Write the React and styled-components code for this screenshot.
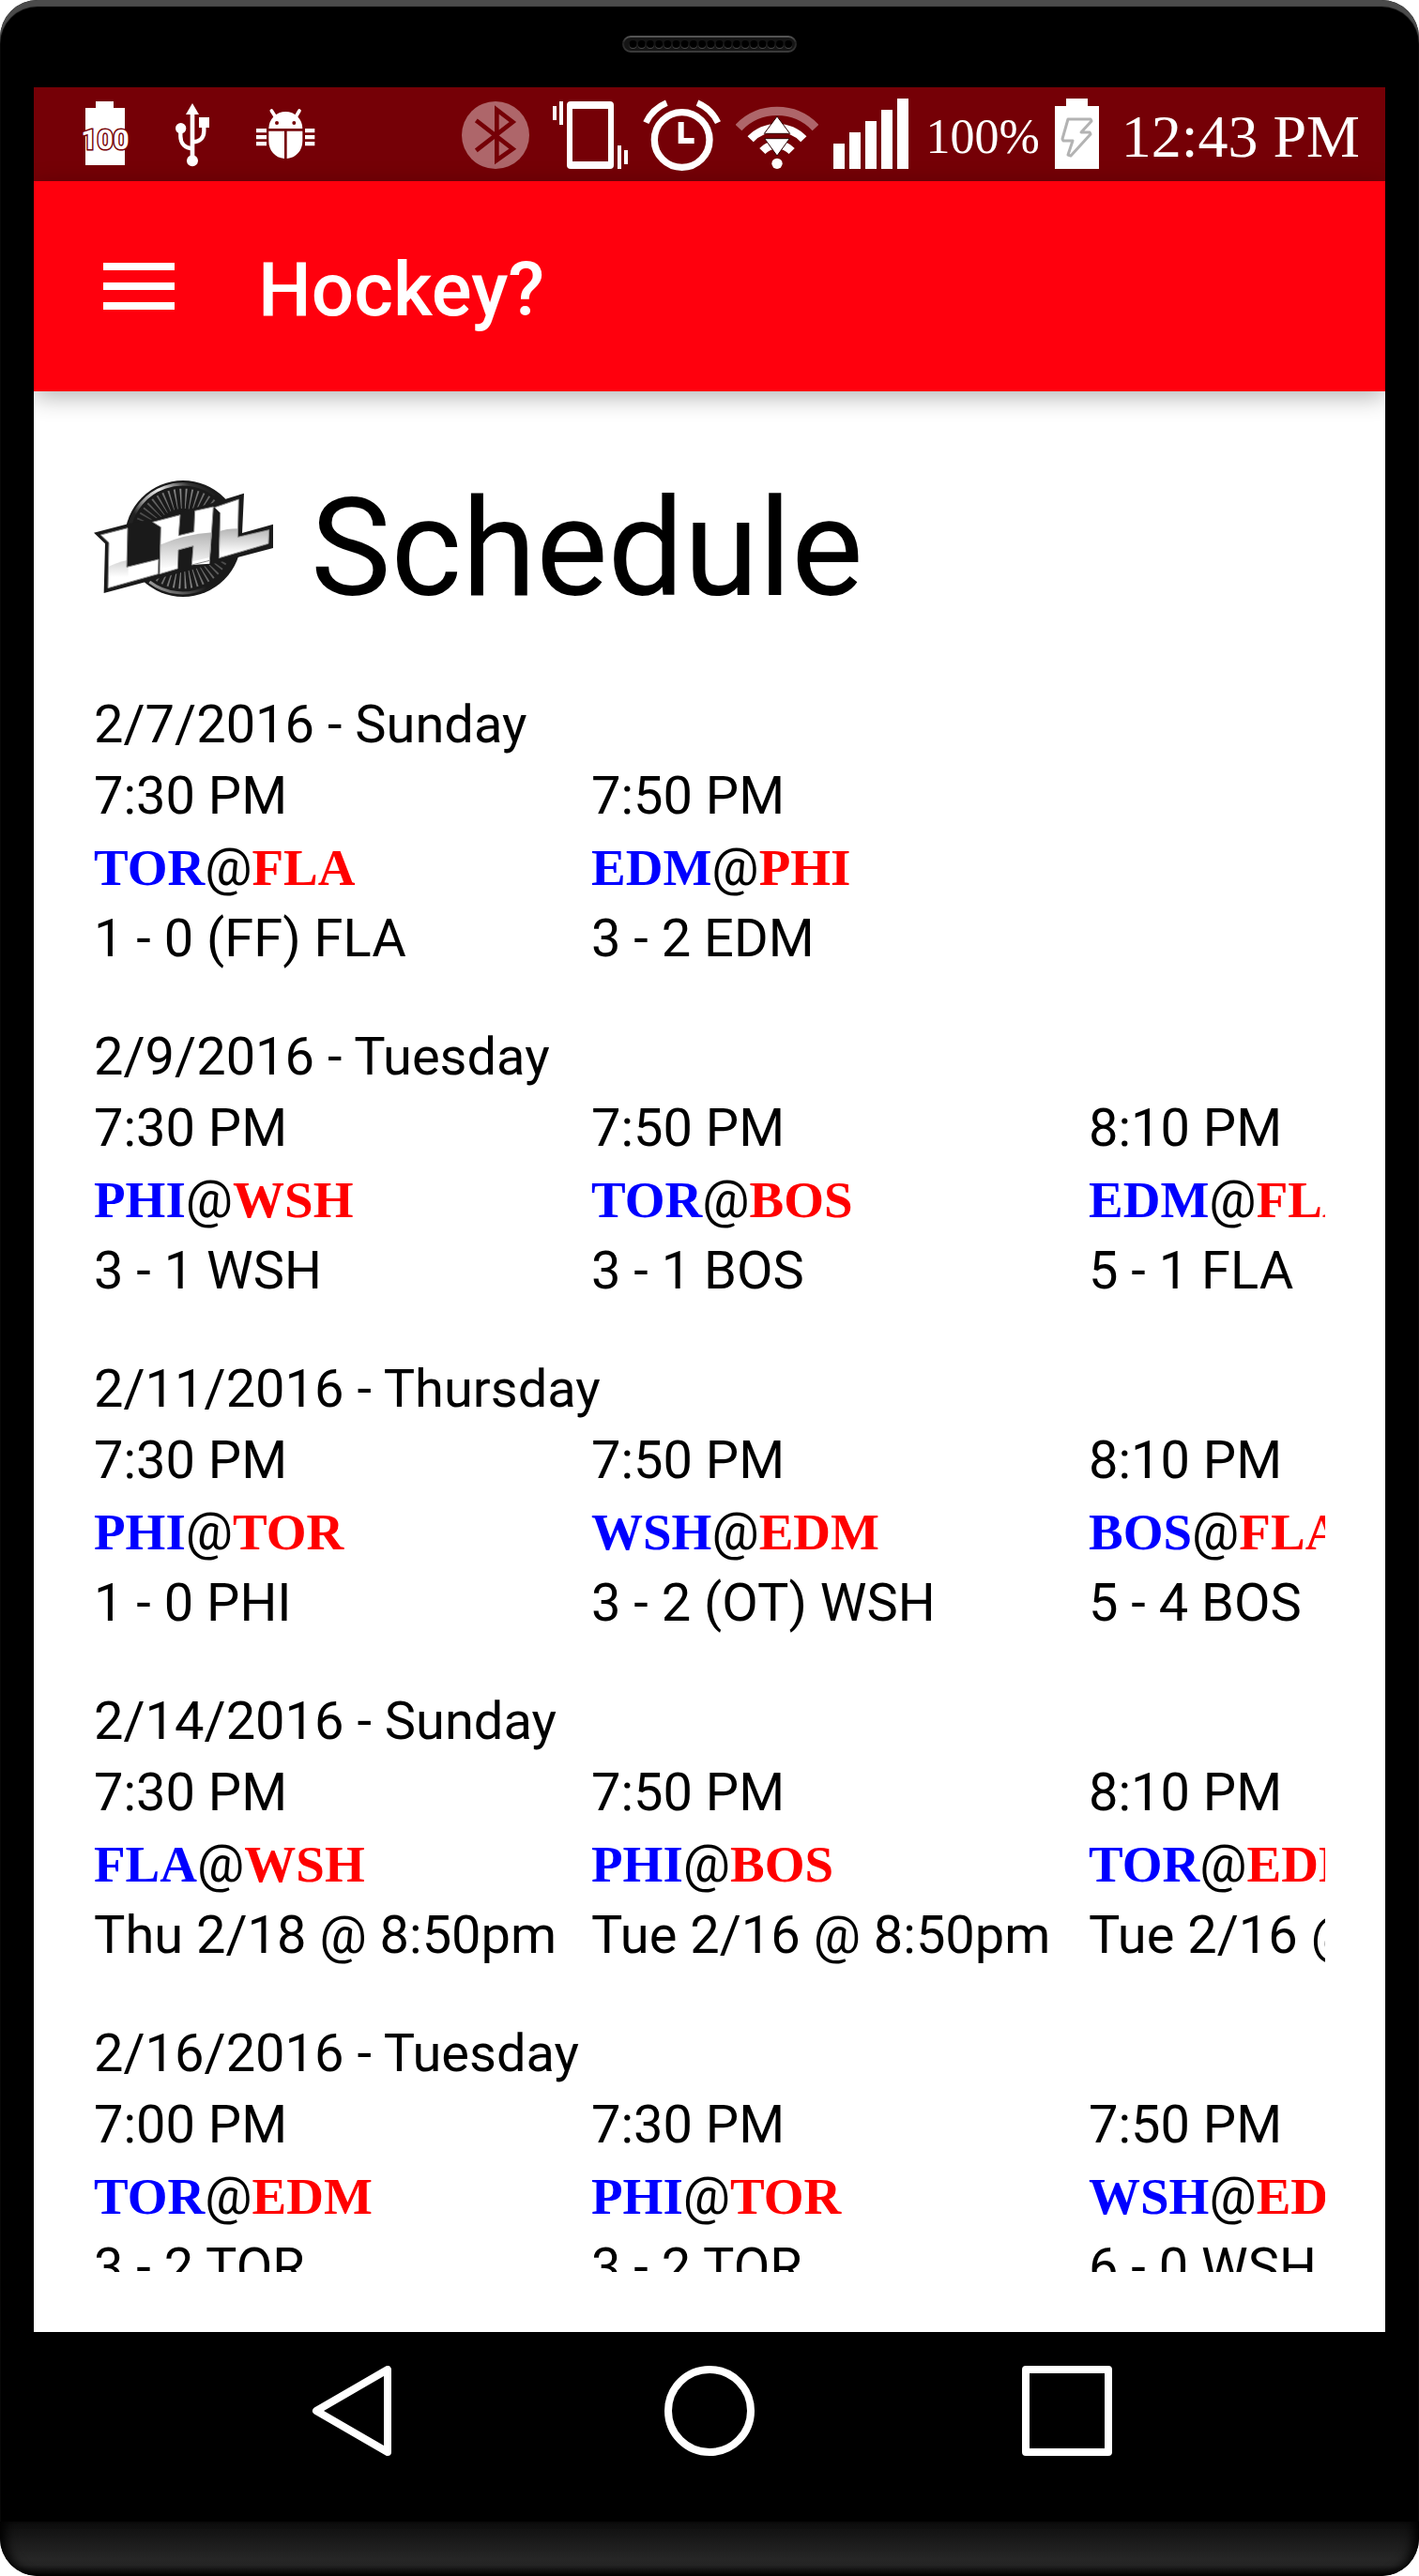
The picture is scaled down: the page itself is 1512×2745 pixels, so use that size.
import React from "react";
import styled, { createGlobalStyle } from "styled-components";

const MAROON = "#750006";
const FADED = "#ae666a";

const GlobalStyle = createGlobalStyle`
  *, *::before, *::after { box-sizing: border-box; }
  body { margin: 0; background: #fff; font-family: Roboto, "Liberation Sans", sans-serif; color: #000; }
  svg { display: block; flex: none; }
`;

const Phone = styled.div`
  display: flex;
  flex-direction: column;
  height: 100vh;
  overflow: hidden;
  background: #000;
  border-radius: 40px;
  box-shadow: inset 0 7px 1px #4b4b4b;
`;

const TopBezel = styled.div`
  display: flex;
  flex: none;
  align-items: center;
  justify-content: center;
  height: 93px;
`;

const Screen = styled.div`
  display: flex;
  flex: 1;
  flex-direction: column;
  min-height: 0;
  margin: 0 36px;
  overflow: hidden;
  background: #fff;
`;

const StatusBar = styled.div`
  display: flex;
  flex: none;
  justify-content: space-between;
  height: 100px;
  padding: 0 27px 0 52px;
  background: ${MAROON};
  color: #fff;
`;

const StatusGroup = styled.div`
  display: flex;
  align-items: center;
  gap: ${(p) => p.$gap}px;
`;

const StatusText = styled.span`
  padding-top: 6px;
  font-family: "Liberation Serif", serif;
  font-size: ${(p) => p.$size}px;
  line-height: 72px;
  white-space: nowrap;
`;

const AppBar = styled.header`
  position: relative;
  z-index: 1;
  display: flex;
  flex: none;
  align-items: center;
  gap: 89px;
  height: 224px;
  padding: 0 74px;
  background: #ff000d;
  color: #fff;
  box-shadow: 0 6px 24px rgba(0, 0, 0, 0.3);
`;

const IconButton = styled.button`
  display: block;
  padding: 0;
  border: 0;
  background: none;
  color: #fff;
  cursor: pointer;
`;

const AppTitle = styled.div`
  padding-top: 8px;
  font-size: 80px;
  font-weight: 500;
  line-height: 96px;
`;

const Content = styled.main`
  display: flex;
  flex: 1;
  min-height: 0;
  padding: 64px;
`;

const Scroller = styled.div`
  flex: 1;
  min-width: 0;
  overflow: auto;
  scrollbar-width: none;
`;

const PageHeader = styled.div`
  display: flex;
  align-items: baseline;
  gap: 40px;
  padding: 20px 0 65px;
`;

const PageTitle = styled.h1`
  margin: 0;
  font-size: 144px;
  font-weight: 400;
  line-height: 168px;
`;

const Day = styled.section`
  margin-bottom: 50px;
  font-size: 56px;
  line-height: 76px;
  white-space: nowrap;
`;

const DayTitle = styled.h2`
  margin: 0;
  font-size: inherit;
  font-weight: 400;
`;

const Games = styled.div`
  display: grid;
  grid-auto-flow: column;
  grid-auto-columns: 530px;
`;

const Line = styled.div`
  height: 76px;
`;

const Team = styled.b`
  font-family: "Liberation Serif", serif;
  font-size: 55px;
  line-height: 1;
  color: ${(p) => (p.$home ? "#f00" : "#00f")};
`;

const NavBar = styled.nav`
  display: flex;
  flex: none;
  align-items: flex-start;
  justify-content: center;
  gap: 285px;
  height: 202px;
  padding-top: 36px;
`;

const Chin = styled.div`
  flex: none;
  height: 58px;
  border-radius: 0 0 40px 40px;
  background: linear-gradient(#0d0d0d 0%, #1a1a1a 35%, #262626 68%, #242424 80%, #000 100%);
  box-shadow: inset 12px 0 12px -6px #000, inset -12px 0 12px -6px #000;
`;

const days = [
  {
    date: "2/7/2016 - Sunday",
    games: [
      ["7:30 PM", "TOR", "FLA", "1 - 0 (FF) FLA"],
      ["7:50 PM", "EDM", "PHI", "3 - 2 EDM"],
    ],
  },
  {
    date: "2/9/2016 - Tuesday",
    games: [
      ["7:30 PM", "PHI", "WSH", "3 - 1 WSH"],
      ["7:50 PM", "TOR", "BOS", "3 - 1 BOS"],
      ["8:10 PM", "EDM", "FLA", "5 - 1 FLA"],
    ],
  },
  {
    date: "2/11/2016 - Thursday",
    games: [
      ["7:30 PM", "PHI", "TOR", "1 - 0 PHI"],
      ["7:50 PM", "WSH", "EDM", "3 - 2 (OT) WSH"],
      ["8:10 PM", "BOS", "FLA", "5 - 4 BOS"],
    ],
  },
  {
    date: "2/14/2016 - Sunday",
    games: [
      ["7:30 PM", "FLA", "WSH", "Thu 2/18 @ 8:50pm"],
      ["7:50 PM", "PHI", "BOS", "Tue 2/16 @ 8:50pm"],
      ["8:10 PM", "TOR", "EDM", "Tue 2/16 @ 8:50pm"],
    ],
  },
  {
    date: "2/16/2016 - Tuesday",
    games: [
      ["7:00 PM", "TOR", "EDM", "3 - 2 TOR"],
      ["7:30 PM", "PHI", "TOR", "3 - 2 TOR"],
      ["7:50 PM", "WSH", "EDM", "6 - 0 WSH"],
    ],
  },
];

function Speaker() {
  const holes = Array.from({ length: 19 }, (_, i) => 11.5 + i * 9.2);
  return (
    <svg width="186" height="18" viewBox="0 0 186 18" aria-hidden="true">
      <defs>
        <linearGradient id="rim" x1="0" y1="0" x2="0" y2="1">
          <stop offset="0" stopColor="#555" />
          <stop offset="0.4" stopColor="#222" />
          <stop offset="1" stopColor="#3a3a3a" />
        </linearGradient>
      </defs>
      <rect x="1" y="1" width="184" height="16" rx="8" fill="#151515" stroke="url(#rim)" strokeWidth="2" />
      {holes.map((x) => (
        <g key={x}>
          <circle cx={x} cy="10" r="4" fill="#484848" />
          <circle cx={x} cy="9" r="4" fill="#000" />
        </g>
      ))}
    </svg>
  );
}

function BatteryFull() {
  return (
    <svg width="49" height="100" viewBox="88 93 49 100" overflow="visible" aria-hidden="true">
      <path d="M102 108h19v7h12v61H91v-61h11z" fill="#fff" />
      <text
        x="112" y="159" textAnchor="middle" fontFamily="Roboto, sans-serif" fontWeight="700" fontSize="30"
        fill="#fff" stroke={MAROON} strokeWidth="3" paintOrder="stroke"
      >
        100
      </text>
    </svg>
  );
}

function Usb() {
  return (
    <svg width="36" height="100" viewBox="567 279 108 300" aria-hidden="true" fill="#fff">
      <path d="M600 366l21-36 21 36z" />
      <path d="M614 360h14v140h-14z" />
      <circle cx="621" cy="514" r="18" />
      <circle cx="584" cy="410" r="17" />
      <path d="M642 375h33v33h-33z" />
      <path d="M583 420v16c0 24 16 38 38 39M658 405v14c0 20-12 34-37 35" fill="none" stroke="#fff" strokeWidth="13" />
    </svg>
  );
}

function Bug() {
  return (
    <svg width="63" height="100" viewBox="819 279 189 300" aria-hidden="true" fill="#fff">
      <path d="M859 411a54 54 0 0 1 108 0z" />
      <path d="M868 354l14 22M957 354l-13 22" stroke="#fff" strokeWidth="11" strokeLinecap="round" />
      <circle cx="885" cy="393" r="6" fill={MAROON} />
      <circle cx="940" cy="393" r="6" fill={MAROON} />
      <path d="M859 419h50v88c-30-2-50-26-50-56zM917 419h50v32c0 30-20 54-50 56z" />
      <path d="M819 411h33v13h-33zM819 432h33v13h-33zM819 453h33v13h-33zM975 411h31v13h-31zM975 432h31v13h-31zM975 453h31v13h-31z" />
    </svg>
  );
}

function Bluetooth() {
  return (
    <svg width="81" height="100" viewBox="36 9 243 300" aria-hidden="true">
      <circle cx="144" cy="162" r="108" fill={FADED} />
      <path d="M82 115L199 206L148 242V81L199 120L82 211" fill="none" stroke={MAROON} strokeWidth="14" />
    </svg>
  );
}

function Vibrate() {
  return (
    <svg width="80" height="100" viewBox="327 9 240 300" aria-hidden="true" fill="#fff">
      <path
        fillRule="evenodd"
        d="M384 54h126a12 12 0 0 1 12 12v192a12 12 0 0 1-12 12H384a12 12 0 0 1-12-12V66a12 12 0 0 1 12-12zM390 78v168h114V78z"
      />
      <path d="M327 69h12v45h-12zM348 54h12v75h-12zM534 195h12v75h-12zM555 210h12v45h-12z" />
    </svg>
  );
}

function Alarm() {
  return (
    <svg width="83" height="100" viewBox="619 9 249 300" aria-hidden="true" fill="none" stroke="#fff">
      <circle cx="744" cy="177" r="88" strokeWidth="22" />
      <path d="M741 120v60h42" strokeWidth="18" />
      <path d="M629 122A128 128 0 0 1 695 59M793 59A128 128 0 0 1 859 122" strokeWidth="20" />
    </svg>
  );
}

function Wifi() {
  return (
    <svg width="88" height="100" viewBox="912 9 264 300" aria-hidden="true" fill="none">
      <path d="M921 138A170 170 0 0 1 1167 138" stroke={FADED} strokeWidth="28" />
      <path d="M959 175A118 118 0 0 1 1129 175" stroke="#fff" strokeWidth="26" />
      <path d="M997 213A66 66 0 0 1 1091 213" stroke="#fff" strokeWidth="26" />
      <circle cx="1044" cy="253" r="17" fill="#fff" />
      <path d="M1044 102l41 55h-82zM1004 173h80l-40 55z" fill="#fff" stroke="#2a0002" strokeWidth="3" />
    </svg>
  );
}

function Signal() {
  return (
    <svg width="82" height="100" viewBox="1224 9 246 300" aria-hidden="true" fill="#fff">
      <path d="M1224 189h36v81h-36zM1275 153h36v117h-36zM1326 117h36v153h-36zM1377 81h36v189h-36zM1428 45h36v225h-36z" />
    </svg>
  );
}

function BatteryCharging() {
  return (
    <svg width="55" height="100" viewBox="0 0 55 100" aria-hidden="true">
      <path d="M12 12h23v8h12v67H0V20h12z" fill="#fff" />
      <path
        d="M14 34H38L39 36L28 48H37L38 50L17 73L14 72L19 57H9L8 55Z"
        fill="none" stroke="#b3b3b3" strokeWidth="3" strokeLinejoin="round"
      />
    </svg>
  );
}

function Logo() {
  const rays = [];
  for (let a = -66; a <= 60; a += 7) rays.push(a);
  const spokes = (offset) =>
    rays.map((a) => (
      <path
        key={offset + a}
        d="M-1 -96L-3 -160H3L1 -96Z"
        transform={`translate(345 252) rotate(${a + offset})`}
        fill="#8a8a8a"
        opacity={1 - Math.abs(a) / 110}
      />
    ));
  return (
    <svg width="191" height="122" viewBox="60 66 573 366" overflow="visible" role="img" aria-label="LHL">
      <defs>
        <linearGradient id="ring" x1="0" y1="0.6" x2="1" y2="0.2">
          <stop offset="0" stopColor="#222" />
          <stop offset="0.2" stopColor="#999" />
          <stop offset="0.45" stopColor="#eee" />
          <stop offset="0.8" stopColor="#333" />
          <stop offset="1" stopColor="#1a1a1a" />
        </linearGradient>
        <linearGradient id="ringLow" x1="0" y1="0" x2="1" y2="0">
          <stop offset="0" stopColor="#999" />
          <stop offset="0.5" stopColor="#666" />
          <stop offset="1" stopColor="#1a1a1a" />
        </linearGradient>
        <linearGradient id="gloss" x1="0" y1="0" x2="0" y2="1">
          <stop offset="0" stopColor="#b5b5b5" />
          <stop offset="1" stopColor="#fff" />
        </linearGradient>
        <clipPath id="letters">
          <path d="M82 240L168 218L165 343L267 318L265 365L105 410L108 265ZM248 199L336 176L331 242L380 230L383 163L442 150L430 332L373 336L378 275L330 288L328 348L270 365L274 215ZM446 152L523 126L520 247L620 224L618 268L460 314L464 170Z" />
        </clipPath>
      </defs>
      <circle cx="345" cy="252" r="186" fill="#1a1a1a" />
      <path d="M176 208A174 174 0 0 1 448 112" fill="none" stroke="url(#ring)" strokeWidth="10" />
      <path d="M238 390A174 174 0 0 0 420 408" fill="none" stroke="url(#ringLow)" strokeWidth="9" />
      {spokes(0)}
      {spokes(180)}
      <path d="M60 233L172 204L250 190L336 166L440 138L540 107L534 234L633 206V282L92 426L96 268Z" fill="#1a1a1a" />
      <g clipPath="url(#letters)">
        <path d="M60 100H640V430H60Z" fill="#fff" />
        <path d="M100 345Q130 328 170 320V375H100Z" fill="url(#gloss)" opacity="0.6" />
        <path d="M270 272Q350 238 440 232V310L270 350Z" fill="url(#gloss)" />
        <path d="M455 230Q490 218 530 220L625 222V290L455 300Z" fill="url(#gloss)" />
      </g>
      <path
        d="M82 240L168 218L165 343L267 318L265 365L105 410L108 265ZM248 199L336 176L331 242L380 230L383 163L442 150L430 322L373 336L378 275L330 288L328 348L270 365L274 215ZM446 152L523 126L520 247L620 224L618 268L460 314L464 170Z"
        fill="none" stroke="#8c8c8c" strokeWidth="3"
      />
    </svg>
  );
}

function Game({ game }) {
  const [time, away, home, result] = game;
  return (
    <div>
      <Line>{time}</Line>
      <Line>
        <Team>{away}</Team>@<Team $home>{home}</Team>
      </Line>
      <Line>{result}</Line>
    </div>
  );
}

export default function App() {
  return (
    <Phone>
      <GlobalStyle />
      <TopBezel>
        <Speaker />
      </TopBezel>
      <Screen>
        <StatusBar>
          <StatusGroup $gap={50}>
            <BatteryFull />
            <Usb />
            <Bug />
          </StatusGroup>
          <StatusGroup $gap={16}>
            <Bluetooth />
            <Vibrate />
            <Alarm />
            <Wifi />
            <Signal />
            <StatusText $size={52}>100%</StatusText>
            <BatteryCharging />
            <StatusText $size={64}>12:43 PM</StatusText>
          </StatusGroup>
        </StatusBar>
        <AppBar>
          <IconButton aria-label="Menu">
            <svg width="76" height="50" viewBox="0 0 76 50" fill="currentColor" aria-hidden="true">
              <path d="M0 0h76v8H0zM0 21h76v8H0zM0 42h76v8H0z" />
            </svg>
          </IconButton>
          <AppTitle>Hockey?</AppTitle>
        </AppBar>
        <Content>
          <Scroller>
            <PageHeader>
              <Logo />
              <PageTitle>Schedule</PageTitle>
            </PageHeader>
            {days.map((day) => (
              <Day key={day.date}>
                <DayTitle>{day.date}</DayTitle>
                <Games>
                  {day.games.map((game) => (
                    <Game key={game[0]} game={game} />
                  ))}
                </Games>
              </Day>
            ))}
          </Scroller>
        </Content>
      </Screen>
      <NavBar aria-label="System">
        <IconButton aria-label="Back">
          <svg width="96" height="96" viewBox="0 0 96 96" fill="none" stroke="currentColor" strokeWidth="8" strokeLinejoin="round" aria-hidden="true">
            <path d="M10 48L86 4V92Z" />
          </svg>
        </IconButton>
        <IconButton aria-label="Home">
          <svg width="96" height="96" viewBox="0 0 96 96" fill="none" stroke="currentColor" strokeWidth="8" aria-hidden="true">
            <circle cx="48" cy="48" r="44" />
          </svg>
        </IconButton>
        <IconButton aria-label="Recent apps">
          <svg width="96" height="96" viewBox="0 0 96 96" fill="none" stroke="currentColor" strokeWidth="8" strokeLinejoin="round" aria-hidden="true">
            <path d="M4 4H92V92H4Z" />
          </svg>
        </IconButton>
      </NavBar>
      <Chin />
    </Phone>
  );
}
